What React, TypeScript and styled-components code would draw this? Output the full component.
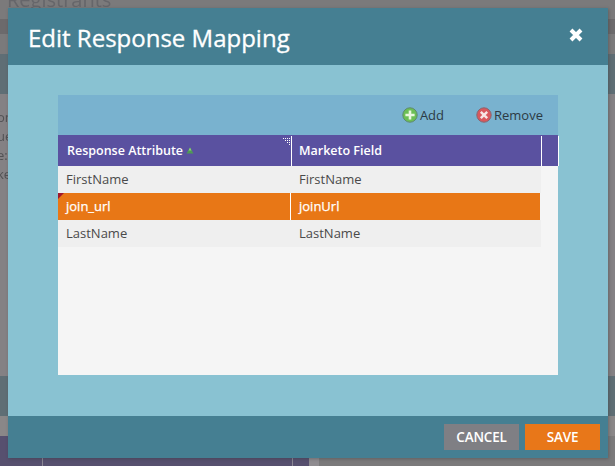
import React from "react";
import styled, { createGlobalStyle } from "styled-components";

const Global = createGlobalStyle`
  html, body { margin: 0; padding: 0; width: 615px; height: 466px; overflow: hidden; }
  body { font-family: "Open Sans", "Noto Sans", sans-serif; background: #7b7a7b; }
`;

// dimmed page behind the dialog
const Backdrop = styled.div`
  position: relative;
  width: 615px;
  height: 466px;
  overflow: hidden;
  background: #7b7a7b;
`;

const BackTitle = styled.div`
  position: absolute;
  left: 7px;
  top: -14px;
  font-size: 20px;
  color: #66666a;
  filter: blur(0.4px);
`;

const BackBand = styled.div<{ $top: number; $height: number; $color: string }>`
  position: absolute;
  left: 0;
  right: 0;
  top: ${(p) => p.$top}px;
  height: ${(p) => p.$height}px;
  background: ${(p) => p.$color};
`;

const BackText = styled.div`
  position: absolute;
  left: -3px;
  top: 108px;
  font-size: 13px;
  line-height: 19px;
  color: #525255;
  filter: blur(0.3px);
`;

const BackFooter = styled.div`
  position: absolute;
  left: 0;
  right: 0;
  top: 436px;
  height: 30px;
  display: grid;
  grid-template-columns: 42px 1px 249px 1px 16px 10px 1fr;
`;

const BackFooterPart = styled.div<{ $color: string }>`
  background: ${(p) => p.$color};
`;

const Dialog = styled.div`
  position: absolute;
  left: 8px;
  top: 8px;
  width: 600px;
  height: 450px;
  display: flex;
  flex-direction: column;
  background: #89c2d2;
  box-shadow: 1px 1px 3px rgba(50, 50, 50, 0.35);
`;

const Header = styled.div`
  flex: none;
  height: 57px;
  display: flex;
  align-items: center;
  justify-content: space-between;
  padding: 0 25px 0 20px;
  box-sizing: border-box;
  background: #457f92;
`;

const Title = styled.div`
  font-size: 24px;
  font-weight: 400;
  color: #fff;
  -webkit-text-stroke: 0.3px #fff;
  margin-top: 1px;
`;

const Close = styled.svg`
  display: block;
  margin-top: -3px;
`;

const Body = styled.div`
  flex: 1;
  padding: 30px 50px 0;
`;

const Panel = styled.div`
  width: 500px;
  height: 280px;
  display: flex;
  flex-direction: column;
  background: #f5f5f5;
`;

const Toolbar = styled.div`
  flex: none;
  height: 40px;
  display: flex;
  align-items: center;
  justify-content: flex-end;
  gap: 32px;
  padding-right: 15px;
  background: #79b2cf;
`;

const ToolButton = styled.div`
  display: flex;
  align-items: center;
  gap: 2px;
  font-size: 13px;
  color: #2c3a44;
`;

const Table = styled.div`
  display: grid;
  grid-template-columns: 233px 250px 1fr;
`;

const HeadCell = styled.div`
  position: relative;
  height: 31px;
  display: flex;
  align-items: center;
  gap: 3px;
  padding-left: 8px;
  box-sizing: border-box;
  background: #5a51a0;
  color: #fff;
  font-size: 12.5px;
  font-weight: 600;
  &:first-child {
    padding-left: 9px;
  }
  &:not(:last-child)::after {
    content: "";
    position: absolute;
    right: -1px;
    top: 1px;
    bottom: 0;
    width: 1px;
    background: #fff;
    z-index: 1;
  }
`;

const Cell = styled.div<{ $selected?: boolean }>`
  position: relative;
  height: 27px;
  display: flex;
  align-items: center;
  padding: 0 0 2px 8px;
  box-sizing: border-box;
  font-size: 13px;
  background: ${(p) => (p.$selected ? "#e87716" : "#efefef")};
  color: ${(p) => (p.$selected ? "#fff" : "#4a4a4a")};
  -webkit-text-stroke: ${(p) => (p.$selected ? "0.25px #fff" : "0")};
  &:nth-child(3n + 1) {
    border-right: 1px solid ${(p) => (p.$selected ? "#fff" : "transparent")};
  }
  &:nth-child(3n + 2) {
    border-right: 1px solid ${(p) => (p.$selected ? "#f5f5f5" : "transparent")};
  }
`;

const Filler = styled.div`
  background: #f5f5f5;
`;

const DirtyMark = styled.div`
  position: absolute;
  left: 0;
  top: 0;
  width: 0;
  height: 0;
  border-top: 6px solid #a1182a;
  border-right: 6px solid transparent;
`;

const GripIcon = styled.svg`
  position: absolute;
  right: 0;
  top: 2px;
`;

const Footer = styled.div`
  flex: none;
  height: 42px;
  display: flex;
  align-items: flex-start;
  justify-content: flex-end;
  gap: 6px;
  padding: 8px 8px 0 0;
  box-sizing: border-box;
  background: #457f92;
`;

const ActionButton = styled.div<{ $primary?: boolean }>`
  width: 75px;
  height: 26px;
  display: flex;
  align-items: center;
  justify-content: center;
  color: #fff;
  font-size: 13.5px;
  font-weight: 600;
  letter-spacing: -0.2px;
  background: ${(p) => (p.$primary ? "#e87719" : "#7f7f84")};
`;

const AddIcon = () => (
  <svg width="16" height="16" viewBox="0 0 16 16">
    <circle cx="8" cy="8" r="7.2" fill="#6cbf55" stroke="#5f8a6c" strokeWidth="1" />
    <path d="M8 3.4v9.2M3.4 8h9.2" stroke="#e9f7de" strokeWidth="2.6" />
  </svg>
);

const RemoveIcon = () => (
  <svg width="16" height="16" viewBox="0 0 16 16">
    <circle cx="8" cy="8" r="7.2" fill="#d9585c" stroke="#8a6570" strokeWidth="1" />
    <path d="M4.8 4.8l6.4 6.4M11.2 4.8l-6.4 6.4" stroke="#f7e6e4" strokeWidth="2.4" />
  </svg>
);

const SortIcon = () => (
  <svg width="8" height="7" viewBox="0 0 8 7">
    <path d="M4 0.5L7.5 6.5H0.5Z" fill="#4f9a55" />
    <path d="M4 0.5L5.5 3.5H2.5Z" fill="#8fd07a" />
  </svg>
);

const rows = [
  { attr: "FirstName", field: "FirstName" },
  { attr: "join_url", field: "joinUrl", selected: true },
  { attr: "LastName", field: "LastName" },
];

export default function App() {
  return (
    <>
      <Global />
      <Backdrop>
        <BackTitle>Registrants</BackTitle>
        <BackBand $top={19} $height={15} $color="#6c6a6c" />
        <BackBand $top={54} $height={40} $color="#5f6e75" />
        <BackBand $top={94} $height={282} $color="#848184" />
        <BackBand $top={376} $height={40} $color="#5f6e75" />
        <BackBand $top={416} $height={20} $color="#8a8788" />
        <BackText>
          on
          <br />
          ue
          <br />
          e:
          <br />
          ke
        </BackText>
        <BackFooter>
          <BackFooterPart $color="#57506f" />
          <BackFooterPart $color="#8b8794" />
          <BackFooterPart $color="#57506f" />
          <BackFooterPart $color="#8b8794" />
          <BackFooterPart $color="#57506f" />
          <BackFooterPart $color="#8f8c90" />
          <BackFooterPart $color="#7b7a7b" />
        </BackFooter>
        <Dialog>
          <Header>
            <Title>Edit Response Mapping</Title>
            <Close width="14" height="14" viewBox="0 0 14 14">
              <path d="M2 2l10 10M12 2L2 12" stroke="#fff" strokeWidth="4" />
            </Close>
          </Header>
          <Body>
            <Panel>
              <Toolbar>
                <ToolButton>
                  <AddIcon />
                  Add
                </ToolButton>
                <ToolButton>
                  <RemoveIcon />
                  Remove
                </ToolButton>
              </Toolbar>
              <Table>
                <HeadCell>
                  Response Attribute
                  <SortIcon />
                  <GripIcon width="9" height="9" viewBox="0 0 9 9">
                    <path
                      d="M1 1h1v1H1zM3 1h1v1H3zM5 1h1v1H5zM7 1h1v1H7zM3 3h1v1H3zM5 3h1v1H5zM7 3h1v1H7zM5 5h1v1H5zM7 5h1v1H7zM7 7h1v1H7z"
                      fill="#fff"
                    />
                  </GripIcon>
                </HeadCell>
                <HeadCell>Marketo Field</HeadCell>
                <HeadCell />
                {rows.map((r) => (
                  <React.Fragment key={r.attr}>
                    <Cell $selected={r.selected}>
                      {r.selected && <DirtyMark />}
                      {r.attr}
                    </Cell>
                    <Cell $selected={r.selected}>{r.field}</Cell>
                    <Filler />
                  </React.Fragment>
                ))}
              </Table>
            </Panel>
          </Body>
          <Footer>
            <ActionButton>CANCEL</ActionButton>
            <ActionButton $primary>SAVE</ActionButton>
          </Footer>
        </Dialog>
      </Backdrop>
    </>
  );
}
